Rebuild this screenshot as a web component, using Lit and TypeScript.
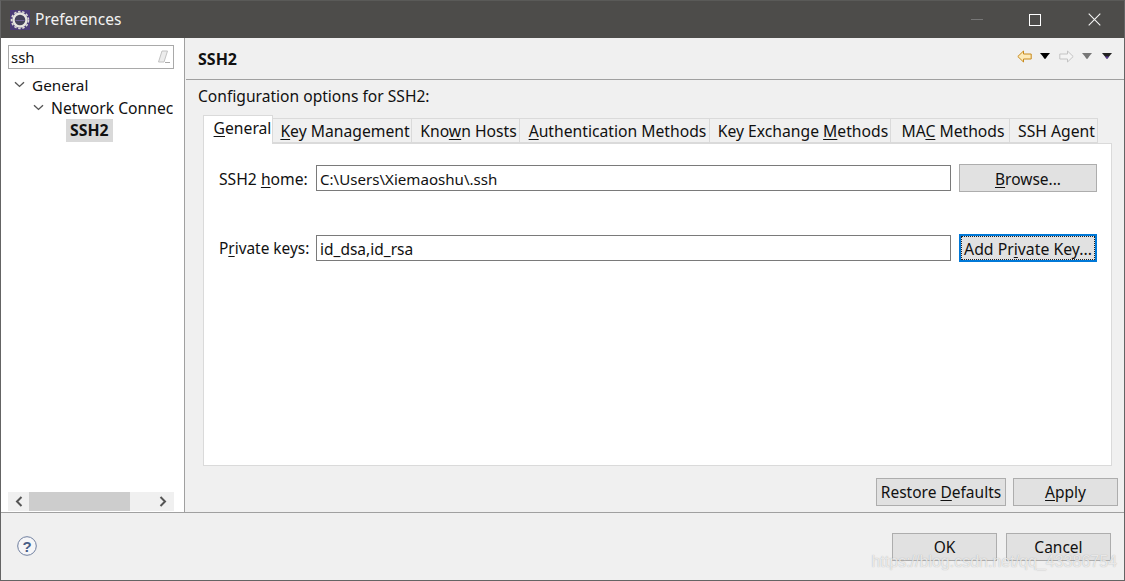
import { LitElement, html, css } from "lit";
import { customElement } from "lit/decorators.js";

const chev = html`<svg class="chev" width="11" height="7" viewBox="0 0 11 7"><path d="M1 1.2 5.5 5.4 10 1.2" fill="none" stroke="#555" stroke-width="1.4"/></svg>`;
const tri = (c: string, tip = c) => html`<svg width="10" height="6" viewBox="0 0 10 6"><path d="M0 0h10L5 6z" fill="${c}"/><path d="M3 3.5h4L5 6z" fill="${tip}"/></svg>`;

@customElement("app-root")
export class AppRoot extends LitElement {
  static styles = css`
    :host { display: flex; flex-direction: column; width: 1125px; height: 581px; box-sizing: border-box; position: relative; overflow: hidden;
      border: 1px solid #646464; border-top-color: #5a5a58; background: #f0f0f0; color: #111; font: 15.5px/20px "Noto Sans", sans-serif; }
    u { text-underline-offset: 2px; text-decoration-thickness: 1px; }
    .title { height: 37px; flex: none; background: #4d4c4a; display: flex; align-items: center; color: #f2f2f2; padding-left: 9px; }
    .title .name { margin-left: 5px; flex: 1; font-size: 15.5px; margin-top: -2px; }
    .wbtn { width: 20px; height: 20px; display: flex; align-items: center; justify-content: center; }
    .wbtn.min { margin-right: 38px; }
    .wbtn.max { margin-right: 39px; }
    .wbtn.close { margin-right: 20px; }
    .main { flex: 1; display: flex; min-height: 0; }
    .left { background: #fff; border-right: 1px solid #a0a0a0; padding: 7px 0 0 7px; width: 176px; flex: none; display: flex; flex-direction: column; }
    .search { width: 166px; height: 24px; box-sizing: border-box; border: 1px solid #a9a9a9; display: flex; align-items: center; justify-content: space-between; padding: 0 2px 0 2px; font-size: 15px; }
    .tree { flex: 1; padding-top: 4px; overflow: hidden; width: 165px; font-size: 15.3px; }
    .row { height: 23px; display: flex; align-items: center; white-space: nowrap; overflow: hidden; }
    .row.l1 { padding-left: 6px; }
    .row.l2 { padding-left: 25px; font-size: 15.7px; }
    .row.l3 { padding-left: 58px; }
    .chev { margin-right: 7px; flex: none; }
    .sel { background: #d9d9d9; font-weight: 700; padding: 0 4px 0 4px; height: 23px; line-height: 23px; font-size: 15.8px; }
    .hbar { width: 166px; height: 19px; margin-bottom: 1px; background: #f0f0f0; display: flex; align-items: center; justify-content: space-between; position: relative; }
    .hbar .thumb { position: absolute; left: 21px; top: 0; bottom: 0; width: 101px; background: #cdcdcd; }
    .hbar svg { margin: 0 7px; }
    .right { flex: 1; min-width: 0; display: flex; flex-direction: column; }
    .head { height: 42px; flex: none; box-sizing: border-box; border-bottom: 1px solid #a0a0a0; margin-left: 1px; padding: 11px 12px 0 12px; display: flex; justify-content: space-between; align-items: flex-start; }
    .head b { font-size: 16px; }
    .nav { display: flex; align-items: center; height: 14px; }
    .nav span { display: flex; }
    .nav .g8 { margin-left: 8px; } .nav .g9 { margin-left: 9px; } .nav .g10 { margin-left: 10px; }
    .desc { margin: 6px 0 0 13px; height: 20px; font-size: 15.6px; }
    .tabs { display: grid; grid-template-columns: 70px 139px 108px 190px 181px 119px 88px; margin: 9px 0 0 18px; width: 895px; height: 28px; align-items: end; font-size: 15.7px; position: relative; z-index: 1; }
    .tab { height: 25px; box-sizing: border-box; background: #f0f0f0; border: 1px solid #dadada; border-left: 0; display: flex; align-items: center; justify-content: center; white-space: nowrap; padding: 1px 0 0 6px; }
    .tab.on { background: #fff; border: 1px solid #dadada; border-bottom: 0; padding: 0 0 5px 9px; margin-bottom: -1px; height: 29px; }
    .panel { margin: 0 12px 0 18px; height: 323px; box-sizing: border-box; background: #fff; border: 1px solid #dadada; padding: 20px 14px 0 15px; }
    .field { display: flex; align-items: center; height: 28px; }
    .field + .field { margin-top: 42px; }
    .field label { width: 97px; flex: none; white-space: nowrap; padding-top: 1px; font-size: 15.7px; }
    .field label.keys { font-size: 15.4px; }
    .input { width: 635px; height: 26px; box-sizing: border-box; border: 1px solid #7a7a7a; background: #fff; padding: 1px 0 0 3px; line-height: 24px; flex: none; margin-right: 8px; white-space: nowrap; }
    .input.path { font-size: 15.1px; }
    .btn { box-sizing: border-box; background: #e1e1e1; border: 1px solid #adadad; display: flex; align-items: center; justify-content: center; white-space: nowrap; flex: none; }
    .field .btn { width: 138px; height: 28px; padding-top: 1px; }
    .btn.focus { border: 2px solid #0078d7; outline: 1px dotted #222; outline-offset: -3px; font-size: 15.8px; }
    .actions { display: flex; justify-content: flex-end; gap: 7px; padding: 12px 6px 0 0; }
    .actions .btn { height: 28px; }
    .w130 { width: 130px; } .w105 { width: 105px; }
    .foot { height: 68px; box-sizing: border-box; flex: none; border-top: 1px solid #a0a0a0; display: flex; align-items: flex-start; justify-content: space-between; padding: 20px 13px 0 16px; }
    .foot .help { margin-top: 3px; }
    .foot .btns { display: flex; gap: 9px; }
    .foot .btn { height: 28px; }
    .mark { position: absolute; right: 7px; bottom: 8px; color: rgba(255,255,255,.72); font: 16px/20px "Liberation Sans", sans-serif; text-shadow: 0 0 1px rgba(120,120,120,.6); white-space: nowrap; pointer-events: none; }
  `;

  render() {
    return html`
      <div class="title">
        <svg width="20" height="20" viewBox="0 0 20 20">
          <rect width="20" height="20" fill="#4b3b78"/>
          <circle cx="10" cy="10" r="8.500" fill="none" stroke="#dcdad6" stroke-width="1.600" stroke-dasharray="2.500 1.700"/>
          <circle cx="10" cy="10" r="6.500" fill="#45425a" stroke="#e6e4e0" stroke-width="2.400"/>
          <path d="M5.500 10.500h9" stroke="#6e5f98" stroke-width="1"/>
        </svg>
        <span class="name">Preferences</span>
        <span class="wbtn min"><svg width="12" height="2"><path d="M0 .5h12" stroke="#777"/></svg></span>
        <span class="wbtn max"><svg width="12" height="12"><rect x=".5" y=".5" width="11" height="11" fill="none" stroke="#fff"/></svg></span>
        <span class="wbtn close"><svg width="13" height="13"><path d="M.7.7l11.6 11.6M12.3.7.7 12.3" stroke="#f4f4f4" stroke-width="1.100"/></svg></span>
      </div>
      <div class="main">
        <div class="left">
          <div class="search">
            <span>ssh</span>
            <svg width="15" height="14" viewBox="0 0 15 14"><path d="M6 1h5.500L8 12H2.500z" fill="#ececec" stroke="#c2c2c2"/><path d="M9 12.500h5" stroke="#aaa"/></svg>
          </div>
          <div class="tree">
            <div class="row l1">${chev}General</div>
            <div class="row l2">${chev}Network Connections</div>
            <div class="row l3"><span class="sel">SSH2</span></div>
          </div>
          <div class="hbar">
            <svg width="8" height="11" viewBox="0 0 8 11"><path d="M6.500 1 2 5.500 6.500 10" fill="none" stroke="#555" stroke-width="2"/></svg>
            <div class="thumb"></div>
            <svg width="8" height="11" viewBox="0 0 8 11"><path d="M1.500 1 6 5.500 1.500 10" fill="none" stroke="#555" stroke-width="2"/></svg>
          </div>
        </div>
        <div class="right">
          <div class="head">
            <b>SSH2</b>
            <div class="nav">
              <svg width="15" height="13" viewBox="0 0 15 13"><path d="M.8 6.500 6.500 1v3h7.700v5H6.500v3z" fill="#fdeab8" stroke="#c88a1c"/></svg>
              <span class="g8">${tri("#000")}</span>
              <span class="g9"><svg width="15" height="13" viewBox="0 0 15 13"><path d="M14.200 6.500 8.500 1v3H.8v5h7.700v3z" fill="#f4f4f4" stroke="#c4c4c4"/></svg></span>
              <span class="g8">${tri("#777")}</span>
              <span class="g10">${tri("#222", "#5b3a9a")}</span>
            </div>
          </div>
          <div class="desc">Configuration options for SSH2:</div>
          <div class="tabs">
            <div class="tab on"><span><u>G</u>eneral</span></div>
            <div class="tab"><span><u>K</u>ey Management</span></div>
            <div class="tab"><span>Kno<u>w</u>n Hosts</span></div>
            <div class="tab"><span><u>A</u>uthentication Methods</span></div>
            <div class="tab"><span>Key Exchange <u>M</u>ethods</span></div>
            <div class="tab"><span>MA<u>C</u> Methods</span></div>
            <div class="tab"><span>SSH Agent</span></div>
          </div>
          <div class="panel">
            <div class="field">
              <label>SSH2 <u>h</u>ome:</label>
              <div class="input path">C:\\Users\\Xiemaoshu\\.ssh</div>
              <div class="btn"><span><u>B</u>rowse...</span></div>
            </div>
            <div class="field">
              <label class="keys">P<u>r</u>ivate keys:</label>
              <div class="input">id_dsa,id_rsa</div>
              <div class="btn focus"><span>Add Pr<u>i</u>vate Key...</span></div>
            </div>
          </div>
          <div class="actions">
            <div class="btn w130"><span>Restore <u>D</u>efaults</span></div>
            <div class="btn w105"><span><u>A</u>pply</span></div>
          </div>
        </div>
      </div>
      <div class="foot">
        <svg class="help" width="20" height="20" viewBox="0 0 20 20"><circle cx="10" cy="10" r="9.300" fill="#f6f6f8" stroke="#6f7f9f" stroke-width="1"/><text x="10" y="15.500" text-anchor="middle" font-family="Liberation Sans" font-weight="700" font-size="15" fill="#4a5f88">?</text></svg>
        <div class="btns">
          <div class="btn w105">OK</div>
          <div class="btn w105">Cancel</div>
        </div>
      </div>
      <div class="mark">https://blog.csdn.net/qq_43386754</div>
    `;
  }
}
